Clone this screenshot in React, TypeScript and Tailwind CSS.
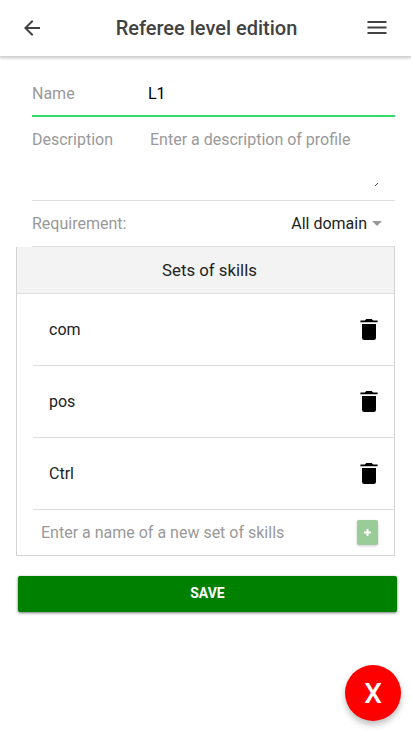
import React from "react";

const skills = ["com", "pos", "Ctrl"];

function TrashIcon() {
  return (
    <svg width="18" height="22" viewBox="0 0 18 22" fill="#000" className="block">
      <path d="M2 5h14v13.700a2.300 2.300 0 0 1-2.300 2.300H4.300A2.300 2.300 0 0 1 2 18.700z" />
      <path d="M17.600 1.500h-4.300C12.500.600 11.800 0 11 0H7C6.200 0 5.500.600 4.700 1.500H.400v1.800h17.200z" />
    </svg>
  );
}

export default function App() {
  return (
    <div className="relative flex h-[731px] w-[411px] flex-col overflow-hidden bg-white font-['Roboto',sans-serif] text-base text-[#222]">
      <header className="flex h-14 shrink-0 items-center bg-white pr-[24px] pl-[24px] shadow-[0_1px_3px_1px_rgba(0,0,0,0.22)]">
        <svg width="16" height="16" viewBox="0 0 16 16" fill="#424242" className="block">
          <path d="M16 7H3.800l5.600-5.600L8 0 0 8l8 8 1.400-1.400L3.800 9H16z" />
        </svg>
        <h1 className="grow pl-[6px] text-center text-[20px] leading-6 font-medium text-[#424242]">Referee level edition</h1>
        <svg width="20" height="14" viewBox="0 0 20 14" fill="#424242" className="block">
          <path d="M.500 0h19v2H.500zM.500 5.500h19v2H.500zM.500 11h19v2H.500z" />
        </svg>
      </header>

      <main className="flex flex-col pt-4">
        <section className="ml-8 mr-4 flex flex-col">
          <div className="flex h-[45px] items-center border-b-2 border-[#32db64]">
            <label className="w-[116px] text-[#999]">Name</label>
            <span className="text-black">L1</span>
          </div>
          <div className="flex h-[84px] border-b border-[#dedede] pt-[11px] text-[#999]">
            <label className="w-[118px]">Description</label>
            <span className="grow">Enter a description of profile</span>
            <svg width="3" height="3" viewBox="0 0 3 3" className="mr-[17px] mt-[55px] block">
              <path d="M0 3 3 0" stroke="#444" fill="none" />
            </svg>
          </div>
          <div className="flex h-[46px] items-center justify-between border-b border-[#dedede] pr-[13px]">
            <span className="text-[#999]">Requirement:</span>
            <div className="flex items-center gap-[5px]">
              <span>All domain</span>
              <span className="size-0 border-x-5 border-t-5 border-x-transparent border-t-[#999]" />
            </div>
          </div>
        </section>

        <section className="mr-4 ml-4 flex h-[309px] flex-col border-x border-b border-[#d3d3d3]">
          <h2 className="flex h-[47px] items-center justify-center border-b border-[#dedede] bg-[#f3f3f3] pt-px pl-2 text-[16.800px]">
            Sets of skills
          </h2>
          {skills.map((skill) => (
            <div key={skill} className="ml-4 flex h-[72px] items-center justify-between border-b border-[#dedede] pr-4 pl-4">
              <span>{skill}</span>
              <TrashIcon />
            </div>
          ))}
          <div className="flex h-[45px] items-center justify-between pr-4 pl-6">
            <span className="text-[#999]">Enter a name of a new set of skills</span>
            <button className="flex h-[25px] w-[21px] items-center justify-center rounded-[2px] bg-[#99cc99] shadow-[0_1px_3px_rgba(0,0,0,0.2)]">
              <svg width="7" height="7" viewBox="0 0 7 7" className="block">
                <path d="M3.500 0v7M0 3.500h7" stroke="#fff" strokeWidth="2" />
              </svg>
            </button>
          </div>
        </section>

        <button className="mt-5 ml-[18px] h-9 w-[379px] rounded-[2px] bg-[#008000] pb-0.5 text-sm font-bold text-white shadow-[0_1px_3px_rgba(0,0,0,0.55)]">
          SAVE
        </button>
      </main>

      <button className="absolute right-[10px] bottom-[10px] size-14 rounded-full bg-[#ff0000] pt-px text-[28px] leading-none font-medium text-white shadow-[0_4px_6px_rgba(0,0,0,0.25)]">
        X
      </button>
    </div>
  );
}
